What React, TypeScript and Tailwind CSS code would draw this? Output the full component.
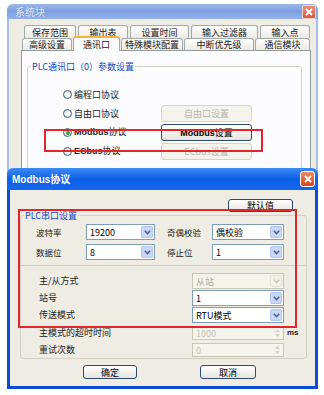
import React from "react";

const cjk = "font-['Noto_Sans_CJK_SC','Liberation_Sans',sans-serif]";

function Chevron({ disabled = false }: { disabled?: boolean }) {
  return (
    <div
      className={
        disabled
          ? "flex w-[12px] shrink-0 items-center justify-center rounded-[2px] border border-[#e4e2d6] bg-[#f3f2ea]"
          : "flex w-[12px] shrink-0 items-center justify-center rounded-[2px] border border-[#b3c6f2] bg-[#c8d8fc]"
      }
    >
      <svg width="7" height="5" viewBox="0 0 7 5">
        <path
          d="M0.8 0.8 L3.5 3.6 L6.2 0.8"
          fill="none"
          stroke={disabled ? "#c9c7ba" : "#4d6185"}
          strokeWidth="1.5"
        />
      </svg>
    </div>
  );
}

function Combo({ w, text, disabled = false }: { w: string; text: string; disabled?: boolean }) {
  return (
    <div
      className={
        (disabled
          ? "border-[#c9c7ba] bg-[#f5f4ea] text-[#aca899] "
          : "border-[#7f9db9] bg-white text-black ") +
        "flex h-[16px] items-stretch border p-[1px] " +
        w
      }
    >
      <div className="flex flex-1 items-center pl-[2px] text-[9px] leading-none">{text}</div>
      <Chevron disabled={disabled} />
    </div>
  );
}

function Spin({ w, text }: { w: string; text: string }) {
  return (
    <div className={"flex h-[14px] items-stretch border border-[#c9c7ba] bg-[#f5f4ea] p-[1px] text-[#c3c1b3] " + w}>
      <div className="flex flex-1 items-center pl-[2px] text-[9px] leading-none">{text}</div>
      <div className="flex w-[10px] flex-col items-center justify-center gap-[2px]">
        <svg width="5" height="3" viewBox="0 0 5 3">
          <path d="M0 3 L2.5 0 L5 3 Z" fill="#d4d2c6" />
        </svg>
        <svg width="5" height="3" viewBox="0 0 5 3">
          <path d="M0 0 L2.5 3 L5 0 Z" fill="#d4d2c6" />
        </svg>
      </div>
    </div>
  );
}

function Btn({ w, h, text, disabled = false, bold = false }: { w: string; h: string; text: React.ReactNode; disabled?: boolean; bold?: boolean }) {
  return (
    <div
      className={
        (disabled
          ? "border-[#d6d4c8] bg-[#f4f3ec] text-[#b9b7aa] "
          : "border-[#2c4a6e] bg-gradient-to-b from-white to-[#e6e4dc] text-black ") +
        (bold ? "font-bold " : "") +
        "flex items-center justify-center rounded-[3px] border text-[9px] leading-none " +
        w +
        " " +
        h
      }
    >
      {text}
    </div>
  );
}

function Radio({ checked = false }: { checked?: boolean }) {
  return (
    <div className="flex h-[9px] w-[9px] shrink-0 items-center justify-center rounded-full border border-[#3a5f87] bg-gradient-to-br from-[#e6e6e0] to-white">
      {checked && <div className="h-[4px] w-[4px] rounded-full bg-[#2aa52a]" />}
    </div>
  );
}

function Tab({ w, text, h = "h-[13px]" }: { w: string; text: string; h?: string }) {
  return (
    <div
      className={
        "flex items-center justify-center rounded-t-[3px] border border-b-0 border-[#a3aaab] bg-gradient-to-b from-white to-[#eceae3] text-[9px] leading-none text-[#222] " +
        w +
        " " +
        h
      }
    >
      {text}
    </div>
  );
}

function CloseX({ color }: { color: string }) {
  return (
    <svg width="8" height="8" viewBox="0 0 8 8">
      <path d="M1 1 L7 7 M7 1 L1 7" stroke={color} strokeWidth="1.8" />
    </svg>
  );
}

export default function App() {
  return (
    <div className={"relative h-[395px] w-[324px] overflow-hidden bg-white " + cjk}>
      {/* Window 1: 系统块 */}
      <div className="absolute left-[7px] top-[4px] flex h-[200px] w-[311px] flex-col">
        <div className="flex h-[23px] items-center justify-between rounded-t-[6px] bg-gradient-to-b from-[#9db7ea] via-[#7e9fe0] to-[#94b1ea] pl-[8px] pr-[2px]">
          <span className="text-[10px] text-[#e4ecfb] [text-shadow:0_0_1px_#5a7bc4]">系统块</span>
          <div className="flex h-[14px] w-[14px] items-center justify-center rounded-[2px] border border-[#f1d2c8] bg-gradient-to-b from-[#e98f78] to-[#d45a3e]">
            <CloseX color="#ffffff" />
          </div>
        </div>
        <div className="flex flex-1 flex-col border-x-[2px] border-[#a9bde9] bg-[#efede3] pl-[12px] pr-[5px] pt-[6px]">
          <div className="ml-[3px] flex gap-[2px]">
            <Tab w="w-[52px]" text="保存范围" />
            <Tab w="w-[50px]" text="输出表" />
            <Tab w="w-[59px]" text="设置时间" />
            <Tab w="w-[67px]" text="输入过滤器" />
            <Tab w="w-[50px]" text="输入点" />
          </div>
          <div className="ml-[1px] flex items-end gap-[1px]">
            <Tab w="w-[50px]" text="高级设置" h="h-[12px]" />
            <div className="relative z-10 -mb-[1px] -mt-[2px] flex h-[15px] w-[47px] items-center justify-center rounded-t-[3px] border border-b-0 border-x-[#a3aaab] border-t-[2px] border-t-[#f5b53a] bg-[#fcfcfe] pb-[1px] text-[9px] leading-none text-[#222]">
              通讯口
            </div>
            <Tab w="w-[62px]" text="特殊模块配置" h="h-[12px]" />
            <Tab w="w-[70px]" text="中断优先级" h="h-[12px]" />
            <Tab w="w-[55px]" text="通信模块" h="h-[12px]" />
          </div>
          <div className="flex-1 border border-[#919b9c] bg-[#fcfcfe] pl-[5px] pr-[8px] pt-[15px]">
            <div className="relative h-[140px] rounded-[3px] border border-[#d5d3c6] pt-[18px]">
              <span className="absolute -top-[6px] left-[3px] bg-[#fcfcfe] px-[1px] text-[9px] leading-[11px] text-[#1546c8]">
                PLC通讯口（0）参数设置
              </span>
              <div className="flex flex-col pl-[35px] text-[9px] text-[#222]">
                <div className="flex h-[19px] items-center">
                  <div className="flex w-[98px] items-center gap-[2px]">
                    <Radio />
                    <span>编程口协议</span>
                  </div>
                </div>
                <div className="flex h-[19px] items-center">
                  <div className="flex w-[98px] items-center gap-[2px]">
                    <Radio />
                    <span>自由口协议</span>
                  </div>
                  <Btn w="w-[91px]" h="h-[17px]" text="自由口设置" disabled />
                </div>
                <div className="flex h-[19px] items-center">
                  <div className="flex w-[98px] items-center gap-[2px]">
                    <Radio checked />
                    <span>
                      <b className="font-['Liberation_Sans',sans-serif]">Modbus</b>协议
                    </span>
                  </div>
                  <Btn
                    w="w-[91px]"
                    h="h-[17px]"
                    text={
                      <span>
                        <b className="font-['Liberation_Sans',sans-serif]">Modbus</b>设置
                      </span>
                    }
                  />
                </div>
                <div className="flex h-[19px] items-center">
                  <div className="flex w-[98px] items-center gap-[2px]">
                    <Radio />
                    <span>
                      <b className="font-['Liberation_Sans',sans-serif]">ECbus</b>协议
                    </span>
                  </div>
                  <Btn w="w-[91px]" h="h-[17px]" text="ECbus设置" disabled />
                </div>
              </div>
            </div>
          </div>
        </div>
      </div>

      {/* red highlight 1 */}
      <div className="absolute left-[44px] top-[129px] h-[23px] w-[219px] border-[2px] border-[#e2262b]" />

      {/* Window 2: Modbus协议 */}
      <div className="absolute left-[7px] top-[168px] flex h-[221px] w-[311px] flex-col">
        <div className="flex h-[22px] items-center justify-between rounded-t-[6px] bg-gradient-to-b from-[#3d8cf5] via-[#0b5fe6] to-[#1667ee] pl-[5px] pr-[3px]">
          <span className="text-[10px] font-bold text-white">
            <span className="font-['Liberation_Sans',sans-serif]">Modbus</span>协议
          </span>
          <div className="flex h-[16px] w-[15px] items-center justify-center rounded-[3px] border border-white bg-gradient-to-b from-[#f08a5e] to-[#d8431d]">
            <CloseX color="#ffffff" />
          </div>
        </div>
        <div className="flex flex-1 flex-col border-x-[3px] border-b-[3px] border-[#0d4bd6] bg-[#efede3] pt-[9px]">
          <div className="ml-[218px]">
            <Btn w="w-[65px]" h="h-[13px]" text="默认值" />
          </div>
          <div className="relative ml-[10px] mt-[3px] flex h-[144px] w-[287px] flex-col rounded-[3px] border border-[#d2d0c2] text-[9px] text-[#222]">
            <span className="absolute -top-[6px] left-[3px] bg-[#efede3] px-[1px] text-[9px] leading-[11px] text-[#1546c8]">
              PLC串口设置
            </span>
            <div className="flex h-[49px] flex-col gap-[4px] pl-[15px] pt-[8px]">
              <div className="flex items-center">
                <span className="w-[50px] text-[8.5px]">波特率</span>
                <Combo w="w-[69px]" text="19200" />
                <span className="ml-[12px] w-[45px] text-[8.5px]">奇偶校验</span>
                <Combo w="w-[72px]" text="偶校验" />
              </div>
              <div className="flex items-center">
                <span className="w-[50px] text-[8.5px]">数据位</span>
                <Combo w="w-[69px]" text="8" />
                <span className="ml-[12px] w-[45px] text-[8.5px]">停止位</span>
                <Combo w="w-[72px]" text="1" />
              </div>
            </div>
            <div className="flex flex-1 flex-col gap-[1px] border-t border-[#d2d0c2] pl-[18px] pt-[7px]">
              <div className="flex items-center">
                <span className="w-[153px]">主/从方式</span>
                <Combo w="w-[92px]" text="从站" disabled />
              </div>
              <div className="flex items-center">
                <span className="w-[153px]">站号</span>
                <Combo w="w-[92px]" text="1" />
              </div>
              <div className="flex items-center">
                <span className="w-[153px]">传送模式</span>
                <Combo w="w-[92px]" text="RTU模式" />
              </div>
              <div className="mt-[2px] flex items-center">
                <span className="w-[153px]">主模式的超时时间</span>
                <Spin w="w-[92px]" text="1000" />
                <span className="ml-[3px] font-['Liberation_Sans',sans-serif] text-[8px] font-bold">ms</span>
              </div>
              <div className="mt-[2px] flex items-center">
                <span className="w-[153px]">重试次数</span>
                <Spin w="w-[92px]" text="0" />
              </div>
            </div>
          </div>
          <div className="mt-[6px] flex">
            <div className="ml-[73px]">
              <Btn w="w-[54px]" h="h-[14px]" text="确定" />
            </div>
            <div className="ml-[63px]">
              <Btn w="w-[56px]" h="h-[14px]" text="取消" />
            </div>
          </div>
        </div>
      </div>

      {/* red highlight 2 */}
      <div className="absolute left-[18px] top-[209px] h-[119px] w-[279px] border-[2px] border-[#e2262b]" />
    </div>
  );
}
